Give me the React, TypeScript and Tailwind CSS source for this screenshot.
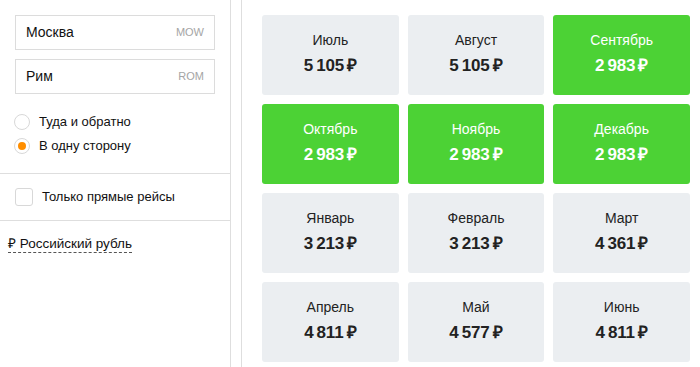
const months = [
  { name: "Июль", price: "5 105", green: false },
  { name: "Август", price: "5 105", green: false },
  { name: "Сентябрь", price: "2 983", green: true },
  { name: "Октябрь", price: "2 983", green: true },
  { name: "Ноябрь", price: "2 983", green: true },
  { name: "Декабрь", price: "2 983", green: true },
  { name: "Январь", price: "3 213", green: false },
  { name: "Февраль", price: "3 213", green: false },
  { name: "Март", price: "4 361", green: false },
  { name: "Апрель", price: "4 811", green: false },
  { name: "Май", price: "4 577", green: false },
  { name: "Июнь", price: "4 811", green: false },
];

function CityInput({ city, code }: { city: string; code: string }) {
  return (
    <div className="flex items-center justify-between h-[35px] border border-[#dcdcdc] px-[10px]">
      <span className="text-[14px] text-[#111]">{city}</span>
      <span className="text-[11px] text-[#a5a5a5]">{code}</span>
    </div>
  );
}

function Radio({ label, checked }: { label: string; checked?: boolean }) {
  return (
    <div className="flex items-center gap-[9px] h-[24px]">
      <span className="w-[16px] h-[16px] rounded-full border border-[#d8d8d8] flex items-center justify-center bg-white">
        {checked && <span className="w-[8px] h-[8px] rounded-full bg-[#ff8e00]" />}
      </span>
      <span className="text-[13px] text-[#111]">{label}</span>
    </div>
  );
}

export default function App() {
  return (
    <div
      className="flex w-[700px] h-[367px] bg-white overflow-hidden"
      style={{ fontFamily: '"Liberation Sans", Arial, sans-serif' }}
    >
      <aside className="w-[231px] shrink-0 border-r border-[#dedede] flex flex-col">
        <div className="px-[15px] pt-[15px] flex flex-col gap-[9px]">
          <CityInput city="Москва" code="MOW" />
          <CityInput city="Рим" code="ROM" />
        </div>
        <div className="px-[14px] pt-[16px] pb-[15px] flex flex-col">
          <Radio label="Туда и обратно" />
          <Radio label="В одну сторону" checked />
        </div>
        <div className="border-t border-[#dedede] h-[47px] px-[15px] flex items-center gap-[9px]">
          <span className="w-[18px] h-[18px] rounded-[3px] border border-[#d8d8d8]" />
          <span className="text-[13px] text-[#111]">Только прямые рейсы</span>
        </div>
        <div className="border-t border-[#dedede] px-[8px] pt-[10px]">
          <span className="text-[13.5px] text-[#111] border-b border-dashed border-[#555] leading-[16px] inline-block">
            ₽ Российский рубль
          </span>
        </div>
      </aside>
      <div className="w-[10px] shrink-0" />
      <main className="flex-1 border-l border-[#dedede] pl-[20px] pr-[10px] pt-[15px]">
        <div className="grid grid-cols-3 gap-x-[9px] gap-y-[9px]">
          {months.map((m) => (
            <div
              key={m.name}
              className={`h-[80px] rounded-[3px] flex flex-col items-center justify-center pb-[3px] ${
                m.green ? "bg-[#4cd235] text-white" : "bg-[#ebeef1] text-[#222]"
              }`}
            >
              <span className="text-[14px] leading-[16px]">{m.name}</span>
              <span className="text-[17px] font-bold leading-[20px] mt-[8px] tracking-[-0.2px]">
                {m.price.replace(" ", "\u2009")}
                {"\u2009"}₽
              </span>
            </div>
          ))}
        </div>
      </main>
    </div>
  );
}
